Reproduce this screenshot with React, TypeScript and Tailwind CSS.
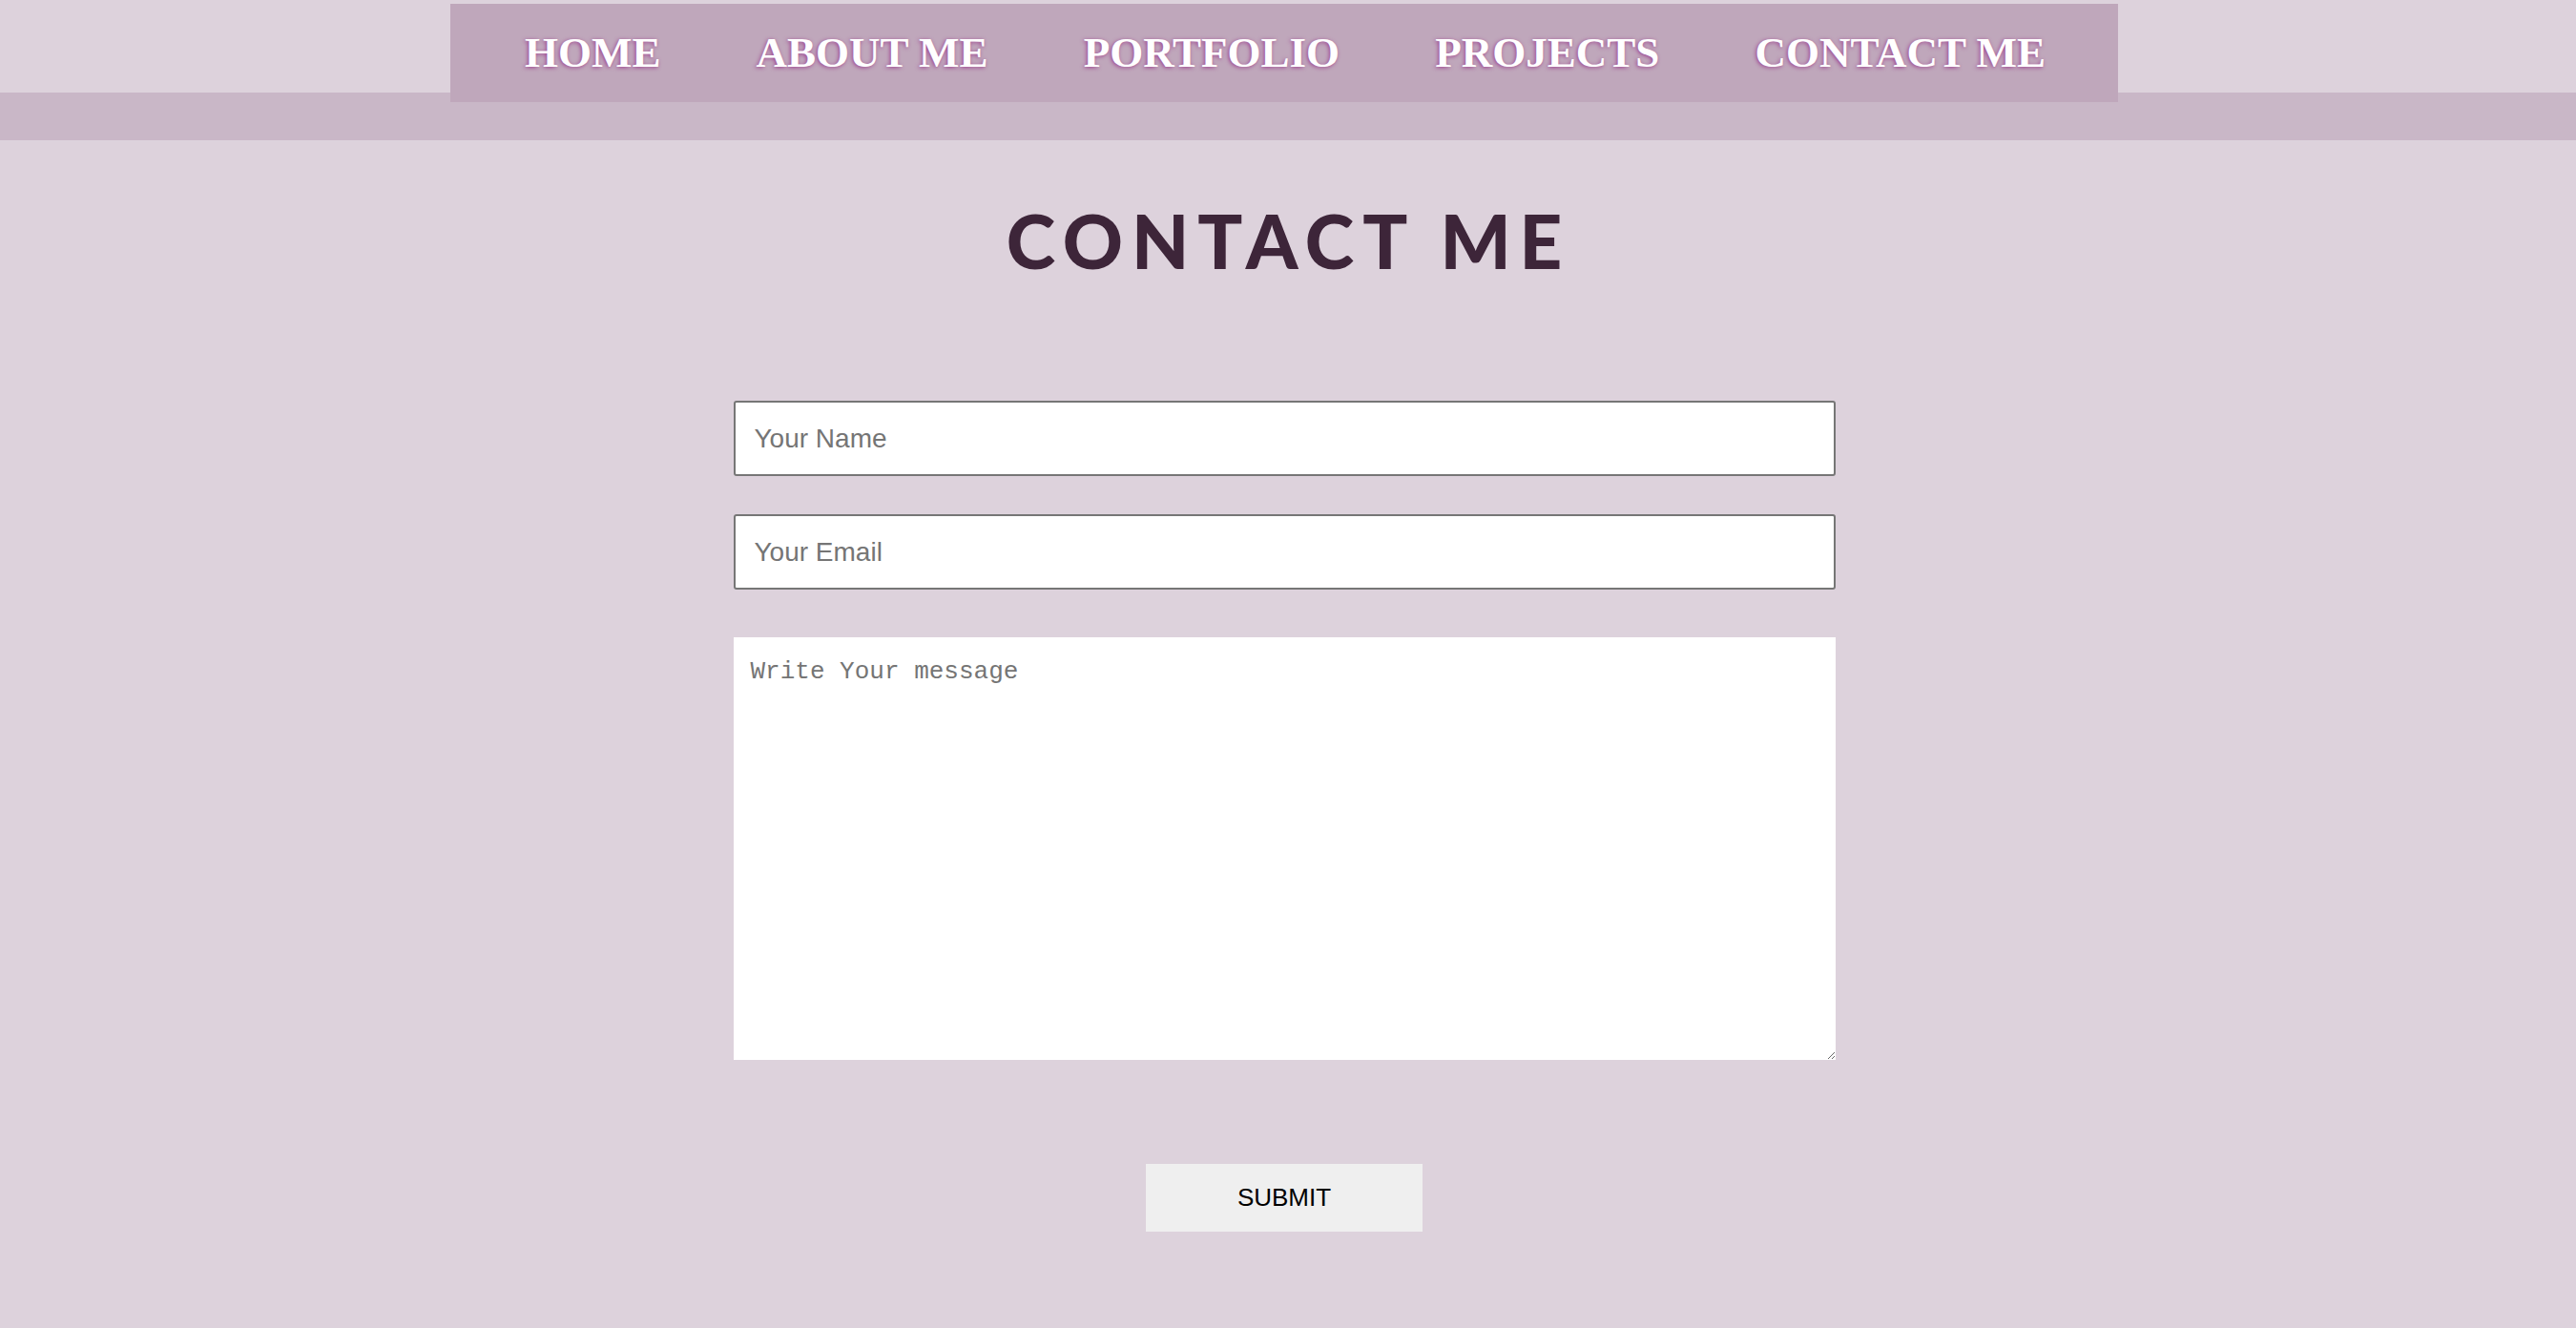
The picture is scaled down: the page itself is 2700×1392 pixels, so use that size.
import React from "react";

const navItems = ["HOME", "ABOUT ME", "PORTFOLIO", "PROJECTS", "CONTACT ME"];

export default function App() {
  return (
    <div className="min-h-screen w-full bg-[#ddd2dc]">
      <header className="pt-[4px]">
        <div className="flex justify-center pr-[8px]">
          <nav className="relative z-10 flex h-[103px] w-[1748px] items-center justify-between bg-[#bfa7bb] pl-[78px] pr-[76px]">
            {navItems.map((item) => (
              <a
                key={item}
                href="#"
                className="text-[45px] font-bold leading-none text-white [font-family:'Liberation_Serif',serif] [text-shadow:-1px_1px_4px_#9c3d8c]"
              >
                {item}
              </a>
            ))}
          </nav>
        </div>
        <div className="-mt-[10px] h-[50px] w-full bg-[#c9b7c7]" />
      </header>

      <main className="flex flex-col items-center pr-[8px]">
        <h1 className="mt-[66px] pl-[0.115em] text-[78px] font-black leading-none tracking-[0.115em] text-[#3d2539] [font-family:Lato,sans-serif]">
          CONTACT ME
        </h1>

        <form className="mt-[129px] flex w-[1155px] flex-col" onSubmit={(e) => e.preventDefault()}>
          <input
            type="text"
            placeholder="Your Name"
            className="h-[79px] w-full rounded-[3px] border-2 border-[#767676] bg-white pl-[20px] text-[28px] text-black outline-none placeholder:text-[#757575] [font-family:'Liberation_Sans',Arial,sans-serif]"
          />
          <input
            type="email"
            placeholder="Your Email"
            className="mt-[40px] h-[79px] w-full rounded-[3px] border-2 border-[#767676] bg-white pl-[20px] text-[28px] text-black outline-none placeholder:text-[#757575] [font-family:'Liberation_Sans',Arial,sans-serif]"
          />
          <textarea
            placeholder="Write Your message"
            className="mt-[50px] h-[443px] w-full border-0 bg-white pl-[18px] pt-[17px] text-[26px] text-black outline-none placeholder:text-[#757575] [font-family:'Liberation_Mono',monospace]"
          />
          <button
            type="submit"
            className="mx-auto mt-[109px] h-[71px] w-[290px] bg-[#efefef] text-[26px] text-black [font-family:'Liberation_Sans',Arial,sans-serif]"
          >
            SUBMIT
          </button>
        </form>
      </main>
    </div>
  );
}
